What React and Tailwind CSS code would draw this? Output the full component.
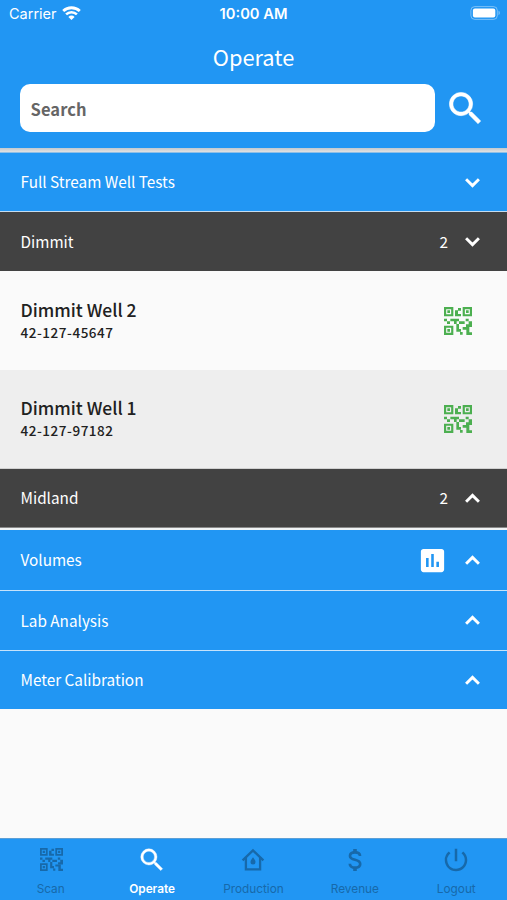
import { MdAssessment, MdPowerSettingsNew } from "react-icons/md";

const wells = [
  { name: "Dimmit Well 2", api: "42-127-45647", bg: "bg-[#fafafa] h-[99px]" },
  { name: "Dimmit Well 1", api: "42-127-97182", bg: "bg-[#eeeeee] h-[98px]" },
];

function WifiIcon() {
  return (
    <svg width="19" height="14" viewBox="0 0 19 14" fill="none" stroke="white" className="relative -top-px">
      <path d="M1.2 5.1a12 12 0 0 1 16.6 0" strokeWidth="2.8" />
      <path d="M4.1 8.4a7.8 7.8 0 0 1 10.8 0" strokeWidth="2.6" />
      <path d="M9.5 14L6.4 10.9a4.4 4.4 0 0 1 6.2 0z" fill="white" stroke="none" />
    </svg>
  );
}

function BatteryIcon() {
  return (
    <svg width="31" height="14" viewBox="0 0 31 14" className="relative -top-px">
      <rect x="0.9" y="0.6" width="26.4" height="12.8" rx="3.8" fill="none" stroke="white" strokeOpacity="0.4" />
      <rect x="2.9" y="2.4" width="22.4" height="9.2" rx="2" fill="white" />
      <path d="M28.6 4.8v4.4c1.5-.5 1.5-3.9 0-4.4z" fill="white" fillOpacity="0.5" />
    </svg>
  );
}

function SearchIcon({ size, className }) {
  return (
    <svg width={size} height={size} viewBox="0 0 24 24" fill="currentColor" className={className}>
      <path
        d="M15.5 14h-.79l-.28-.27A6.47 6.47 0 0 0 16 9.5 6.5 6.5 0 1 0 9.5 16c1.61 0 3.09-.59 4.23-1.57l.27.28v.79l5 4.99L20.49 19l-4.99-5zm-6 0C7.01 14 5 11.99 5 9.5S7.01 5 9.5 5 14 7.01 14 9.5 11.99 14 9.5 14z"
        stroke="currentColor"
        strokeWidth="0.3"
      />
    </svg>
  );
}

function Chevron({ up }) {
  return (
    <svg width="29" height="29" viewBox="0 0 24 24" fill="none" stroke="currentColor" strokeWidth="2.4">
      {up ? <path d="M6.7 14.7L12 9.4l5.3 5.3" /> : <path d="M6.7 9.3L12 14.6l5.3-5.3" />}
    </svg>
  );
}

function QrIcon({ size, className }) {
  return (
    <svg width={size} height={size} viewBox="0 0 84 84" fill="currentColor" className={className}>
      {/* corner markers */}
      <path
        fillRule="evenodd"
        d="M0 0h28v28H0zM6.5 6.5v15h15v-15zM56 0h28v28H56zM62.5 6.5v15h15v-15zM0 56h28v28H0zM6.5 62.5v15h15v-15z"
      />
      <path d="M10 10h8v8h-8zM66 10h8v8h-8zM10 66h8v8h-8z" />
      {/* data cells */}
      <path d="M42 3h9v8h-9zM33 10h9v11h9v7H33z" />
      <path d="M0 35h9v8H0zM9 43h9v8H9zM19 35h26v8h-7v8h-8v-8H19zM45 43h17v8H45zM65 35h9v8h-9zM74 43h10v17H66v-8h8z" />
      <path d="M37 51h8v15h6v8H37zM56 60h20v16h8v8H67V68H56zM48 75h8v8h-8z" />
    </svg>
  );
}

function HouseDropIcon() {
  return (
    <svg width="30" height="30" viewBox="0 0 30 30" fill="none">
      <path d="M4.6 15.4L15 5.4l10.4 10" stroke="currentColor" strokeWidth="2.3" />
      <path d="M7.9 12.6v11.7h14.2V12.6" stroke="currentColor" strokeWidth="2.3" />
      <path d="M15 12.2c1.2 1.7 2.5 3.2 2.5 4.8a2.5 2.5 0 0 1-5 0c0-1.6 1.3-3.1 2.5-4.8z" fill="currentColor" />
    </svg>
  );
}

function DollarIcon() {
  return (
    <svg width="30" height="30" viewBox="0 0 30 30" fill="none" stroke="currentColor" strokeWidth="2.7">
      <path d="M20 10.9c0-2.1-2-3.6-5-3.6s-5 1.4-5 3.7c0 2.1 1.6 3 5 3.8s5.2 1.9 5.2 4.2c0 2.3-2.2 3.7-5.2 3.7s-5.2-1.5-5.2-3.9" />
      <path d="M15 4v4M15 22v4" strokeWidth="3.6" />
    </svg>
  );
}

const tabs = [
  { label: "Scan", icon: <QrIcon size={23} className="mt-[3px] mb-1 ml-px" /> },
  { label: "Operate", icon: <SearchIcon size={30} />, active: true },
  { label: "Production", icon: <HouseDropIcon /> },
  { label: "Revenue", icon: <DollarIcon /> },
  { label: "Logout", icon: <MdPowerSettingsNew size={30} /> },
];

function SectionRow({ title, count, open, chart, className }) {
  return (
    <button
      className={`flex w-full shrink-0 items-center pl-[20.5px] pr-5 text-left text-[15.3px] leading-5 text-white ${className}`}
    >
      <span className="flex-1 pb-[2px]">{title}</span>
      {count && <span className="mr-[10px] pb-[2px]">{count}</span>}
      {chart && <MdAssessment size={31} className="mr-[10px]" />}
      <Chevron up={!open} />
    </button>
  );
}

export default function App() {
  return (
    <div className="flex h-[900px] w-[507px] flex-col overflow-hidden bg-[#fafafa] font-['Noto_Sans_CJK_JP',sans-serif]">
      <header className="flex h-[148px] shrink-0 flex-col bg-[#2196f3] text-white">
        <div className="grid h-[28px] grid-cols-3 items-center pl-[9px] pr-[9px] font-['Inter',sans-serif]">
          <div className="flex items-center gap-[5px]">
            <span className="text-[14.5px] leading-5">Carrier</span>
            <WifiIcon />
          </div>
          <span className="text-center text-[14.7px] font-semibold leading-5">10:00 AM</span>
          <div className="-mr-[3px] flex justify-end">
            <BatteryIcon />
          </div>
        </div>
        <h1 className="mt-[14px] text-center text-[21.8px] leading-[30px]">Operate</h1>
        <div className="mt-[12px] flex items-center pl-5">
          <input
            placeholder="Search"
            className="h-12 w-[415px] rounded-[10px] bg-white px-[10.5px] pt-[2px] text-[16.5px] font-bold tracking-[0.1px] placeholder:text-[#666666]"
          />
          <SearchIcon size={43} className="ml-[9px]" />
        </div>
      </header>

      <div className="h-[5px] shrink-0 border-b border-[#8fbfe6] bg-linear-to-b from-[#c2c9cf] to-[#e2e2e2]" />

      <SectionRow title="Full Stream Well Tests" open className="h-[58px] bg-[#2196f3]" />
      <div className="h-px shrink-0 bg-[#c5dcef]" />
      <SectionRow title="Dimmit" count="2" open className="h-[59px] bg-[#424242]" />
      {wells.map((well) => (
        <div key={well.name} className={`flex shrink-0 items-center pl-[20.5px] pr-[35px] text-[#212121] ${well.bg}`}>
          <div className="flex-1">
            <p className="text-[17.5px] font-medium leading-[22px]">{well.name}</p>
            <p className="text-[13.5px] font-medium leading-[22px] tracking-[0.54px]">{well.api}</p>
          </div>
          <QrIcon size={28} className="text-[#4caf50]" />
        </div>
      ))}
      <div className="h-px shrink-0 bg-[#d0d0d0]" />
      <SectionRow title="Midland" count="2" className="h-[58px] bg-[#424242]" />
      <div className="h-[3px] shrink-0 border-t border-[#8a8a8a] bg-[#f0f3f5]" />
      <SectionRow title="Volumes" chart className="h-[60px] bg-[#2196f3]" />
      <div className="h-px shrink-0 bg-[#c5e3fb]" />
      <SectionRow title="Lab Analysis" className="h-[59px] bg-[#2196f3]" />
      <div className="h-px shrink-0 bg-[#c5e3fb]" />
      <SectionRow title="Meter Calibration" className="h-[58px] bg-[#2196f3]" />

      <nav className="mt-auto grid h-[62px] shrink-0 grid-cols-5 border-t border-[#5b9fd6] bg-[#2196f3] font-['Inter',sans-serif] text-[11.8px]">
        {tabs.map(({ label, icon, active }) => (
          <button
            key={label}
            className={`flex flex-col items-center pt-[6px] ${active ? "font-semibold text-white" : "text-[#1769aa]"}`}
          >
            {icon}
            <span className="mt-[6px] leading-4">{label}</span>
          </button>
        ))}
      </nav>
    </div>
  );
}
